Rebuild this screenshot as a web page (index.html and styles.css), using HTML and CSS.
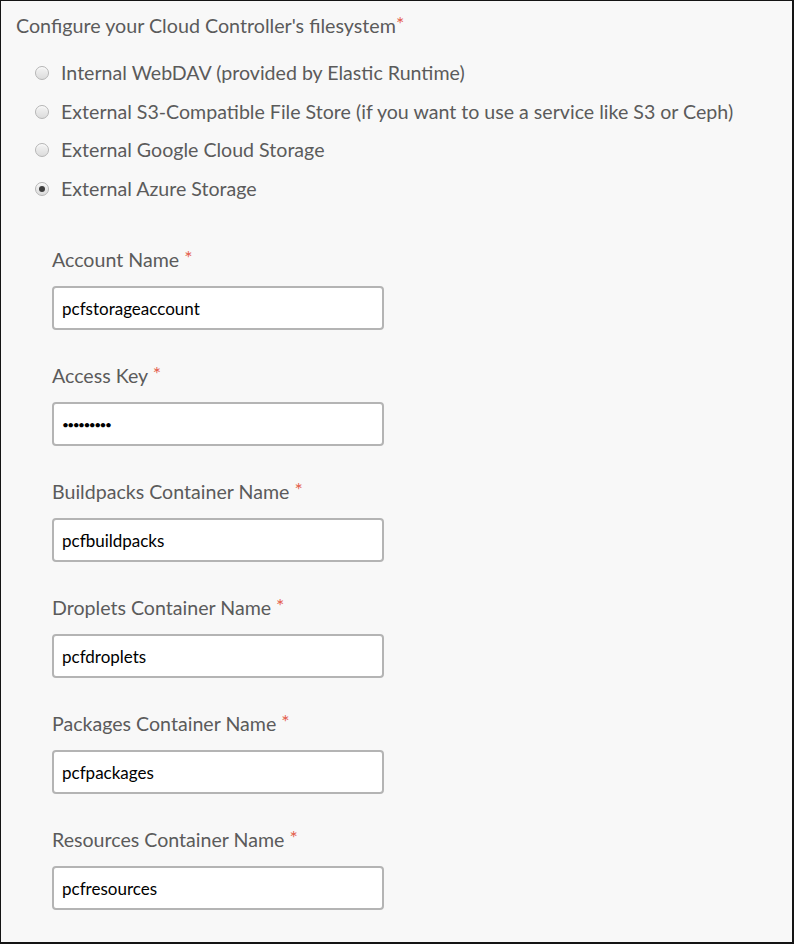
FILE: index.html
```html
<!DOCTYPE html>
<html>
<head>
<meta charset="utf-8">
<link rel="stylesheet" href="styles.css">
</head>
<body>
<div class="panel">
  <div class="title">Configure your Cloud Controller's filesystem<span class="req">*</span></div>
  <div class="radios">
    <div class="radio-row"><span class="radio"></span><span class="radio-label">Internal WebDAV (provided by Elastic Runtime)</span></div>
    <div class="radio-row"><span class="radio"></span><span class="radio-label">External S3-Compatible File Store (if you want to use a service like S3 or Ceph)</span></div>
    <div class="radio-row"><span class="radio"></span><span class="radio-label">External Google Cloud Storage</span></div>
    <div class="radio-row"><span class="radio checked"></span><span class="radio-label">External Azure Storage</span></div>
  </div>
  <div class="fields">
    <div class="field">
      <div class="label">Account Name <span class="req">*</span></div>
      <div class="input">pcfstorageaccount</div>
    </div>
    <div class="field">
      <div class="label">Access Key <span class="req">*</span></div>
      <div class="input password">•••••••••</div>
    </div>
    <div class="field">
      <div class="label">Buildpacks Container Name <span class="req">*</span></div>
      <div class="input">pcfbuildpacks</div>
    </div>
    <div class="field">
      <div class="label">Droplets Container Name <span class="req">*</span></div>
      <div class="input">pcfdroplets</div>
    </div>
    <div class="field">
      <div class="label">Packages Container Name <span class="req">*</span></div>
      <div class="input">pcfpackages</div>
    </div>
    <div class="field">
      <div class="label">Resources Container Name <span class="req">*</span></div>
      <div class="input">pcfresources</div>
    </div>
  </div>
</div>
</body>
</html>
```
FILE: styles.css
```css
html, body {
  margin: 0;
  padding: 0;
}
body {
  font-family: Lato, "Noto Sans", sans-serif;
  color: #5b5b5b;
}
.panel {
  box-sizing: border-box;
  width: 794px;
  height: 944px;
  background: #f8f8f8;
  border-style: solid;
  border-color: #141414;
  border-width: 1px 2px 2px 1px;
  padding: 11px 0 0 15px;
  overflow: hidden;
}
.title {
  font-size: 19.7px;
  line-height: 28px;
  white-space: nowrap;
}
.req {
  color: #e4604e;
  font-size: 1em;
  line-height: 0;
  vertical-align: 0.12em;
}
.radios {
  margin-top: 14px;
  padding-left: 19px;
  display: grid;
  grid-auto-rows: 38.5px;
}
.radio-row {
  display: flex;
  align-items: center;
  gap: 12px;
}
.radio {
  box-sizing: border-box;
  width: 14px;
  height: 14px;
  border-radius: 50%;
  border: 1px solid #b5b5b5;
  background: linear-gradient(#f4f4f4, #dcdcdc);
  box-shadow: inset 0 1px 1px rgba(255,255,255,0.8);
  display: flex;
  align-items: center;
  justify-content: center;
  flex: none;
}
.radio.checked::after {
  content: "";
  width: 6px;
  height: 6px;
  border-radius: 50%;
  background: #3e3e3e;
}
.radio-label {
  font-size: 19.6px;
  line-height: 24px;
  white-space: nowrap;
}
.fields {
  margin-top: 40px;
  padding-left: 36px;
  display: flex;
  flex-direction: column;
  gap: 34px;
}
.field {
  display: flex;
  flex-direction: column;
  gap: 14px;
}
.label {
  font-size: 19.6px;
  line-height: 24px;
  white-space: nowrap;
}
.input {
  box-sizing: border-box;
  width: 332px;
  height: 44px;
  background: #fff;
  border: 2px solid #b4b4b4;
  border-radius: 4px;
  padding: 0 8px;
  display: flex;
  align-items: center;
  font-size: 17px;
  color: #000;
}
.input.password {
  font-size: 12px;
  letter-spacing: -1.6px;
}
```
